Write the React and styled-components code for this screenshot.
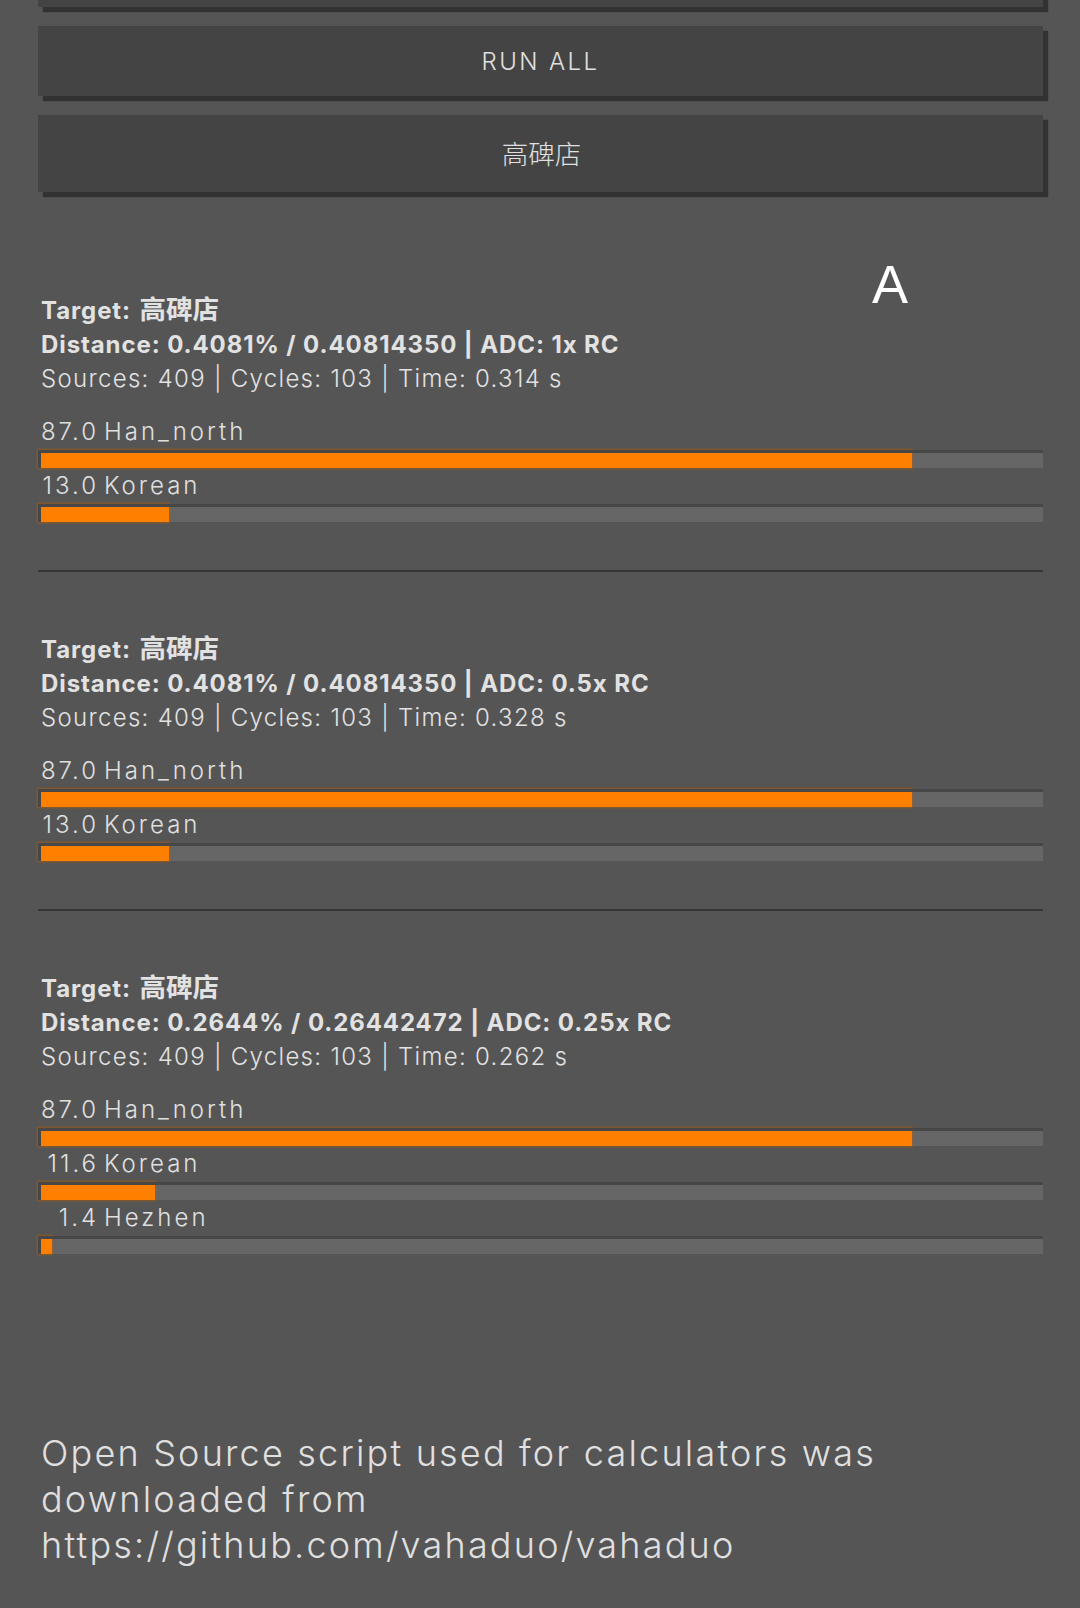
import React from "react";
import styled, { createGlobalStyle } from "styled-components";

const GlobalStyle = createGlobalStyle`
  html, body {
    margin: 0;
    padding: 0;
    background: #555555;
  }
  body {
    font-family: Inter, "Noto Sans", "Noto Sans CJK SC", sans-serif;
    color: #e0e0e0;
  }
`;

const Page = styled.div`
  padding: 0 37px 40px 38px;
  overflow: hidden;
`;

const ButtonStack = styled.div`
  display: flex;
  flex-direction: column;
  gap: 19px;
  margin-top: ${(p) => p.$offset}px;
`;

const Button = styled.button`
  display: flex;
  align-items: center;
  justify-content: center;
  width: 100%;
  height: ${(p) => p.$h}px;
  padding: 0;
  border: none;
  background: #444444;
  box-shadow: 5px 5px 1px #323232;
  color: #e0e0e0;
  font-family: Inter, "Noto Sans CJK SC", sans-serif;
  font-weight: 300;
  font-size: 24px;
  letter-spacing: 2.4px;
  cursor: pointer;
`;

const Cjk = styled.span`
  font-family: "Noto Sans CJK SC", sans-serif;
  font-size: 26.5px;
  line-height: 1;
  letter-spacing: 0;
  margin-left: 2px;
`;

const Results = styled.section`
  position: relative;
  margin-top: 102px;
`;

const Badge = styled.div`
  position: absolute;
  top: -37px;
  left: 834px;
  font-family: "Liberation Sans", Arial, sans-serif;
  font-size: 54px;
  line-height: 54px;
  color: #ffffff;
`;

const Block = styled.article`
  display: flex;
  flex-direction: column;
`;

const InfoLine = styled.div`
  padding-left: 3px;
  height: 34px;
  font-size: 24px;
  line-height: 34px;
  font-weight: ${(p) => (p.$bold ? 700 : 300)};
  letter-spacing: ${(p) => (p.$bold ? 0.9 : 1.3)}px;
  color: #e2e2e2;
  white-space: nowrap;
`;

const BarList = styled.div`
  display: flex;
  flex-direction: column;
  gap: 3px;
  margin-top: 21px;
`;

const Label = styled.div`
  display: flex;
  font-size: 24px;
  line-height: 30px;
  font-weight: 300;
  letter-spacing: 3px;
  color: #e0e0e0;
`;

const Num = styled.span`
  width: 61px;
  text-align: right;
`;

const Name = styled.span`
  margin-left: 5px;
`;

const Track = styled.div`
  position: relative;
  height: 18px;
  background: #666666;

  &::after {
    content: "";
    position: absolute;
    inset: 0;
    box-shadow: inset 3px 3px 0 #474747;
  }
`;

const Fill = styled.div`
  height: 100%;
  background: #ff8000;
  box-shadow: 0 0 2px 1px rgba(190, 95, 0, 0.6);
`;

const Divider = styled.hr`
  margin: 48px 0 61px;
  border: none;
  height: 2px;
  background: #353535;
`;

const Footer = styled.p`
  margin: 176px 0 0;
  padding-left: 3px;
  font-size: 36px;
  line-height: 46px;
  font-weight: 300;
  letter-spacing: 2.2px;
  color: #e0e0e0;
`;

const results = [
  {
    distance: "0.4081% / 0.40814350",
    adc: "1x",
    time: "0.314",
    bars: [
      { v: "87.0", n: "Han_north", w: 87 },
      { v: "13.0", n: "Korean", w: 13 },
    ],
  },
  {
    distance: "0.4081% / 0.40814350",
    adc: "0.5x",
    time: "0.328",
    bars: [
      { v: "87.0", n: "Han_north", w: 87 },
      { v: "13.0", n: "Korean", w: 13 },
    ],
  },
  {
    distance: "0.2644% / 0.26442472",
    adc: "0.25x",
    time: "0.262",
    bars: [
      { v: "87.0", n: "Han_north", w: 87 },
      { v: "11.6", n: "Korean", w: 11.6 },
      { v: "1.4", n: "Hezhen", w: 1.4 },
    ],
  },
];

export default function App() {
  return (
    <>
      <GlobalStyle />
      <Page>
        <ButtonStack $offset={-63}>
          <Button $h={70} aria-label="options" />
          <Button $h={70}>RUN ALL</Button>
          <Button $h={77}>
            <Cjk>高碑店</Cjk>
          </Button>
        </ButtonStack>
        <Results>
          <Badge>A</Badge>
          {results.map((r, i) => (
            <React.Fragment key={i}>
              {i > 0 && <Divider />}
              <Block>
                <InfoLine $bold>
                  Target: <Cjk>高碑店</Cjk>
                </InfoLine>
                <InfoLine $bold>
                  Distance: {r.distance} | ADC: {r.adc} RC
                </InfoLine>
                <InfoLine>
                  Sources: 409 | Cycles: 103 | Time: {r.time} s
                </InfoLine>
                <BarList>
                  {r.bars.map((b) => (
                    <React.Fragment key={b.n}>
                      <Label>
                        <Num>{b.v}</Num>
                        <Name>{b.n}</Name>
                      </Label>
                      <Track>
                        <Fill style={{ width: `${b.w}%` }} />
                      </Track>
                    </React.Fragment>
                  ))}
                </BarList>
              </Block>
            </React.Fragment>
          ))}
        </Results>
        <Footer>
          Open Source script used for calculators was downloaded from
          https://github.com/vahaduo/vahaduo
        </Footer>
      </Page>
    </>
  );
}
